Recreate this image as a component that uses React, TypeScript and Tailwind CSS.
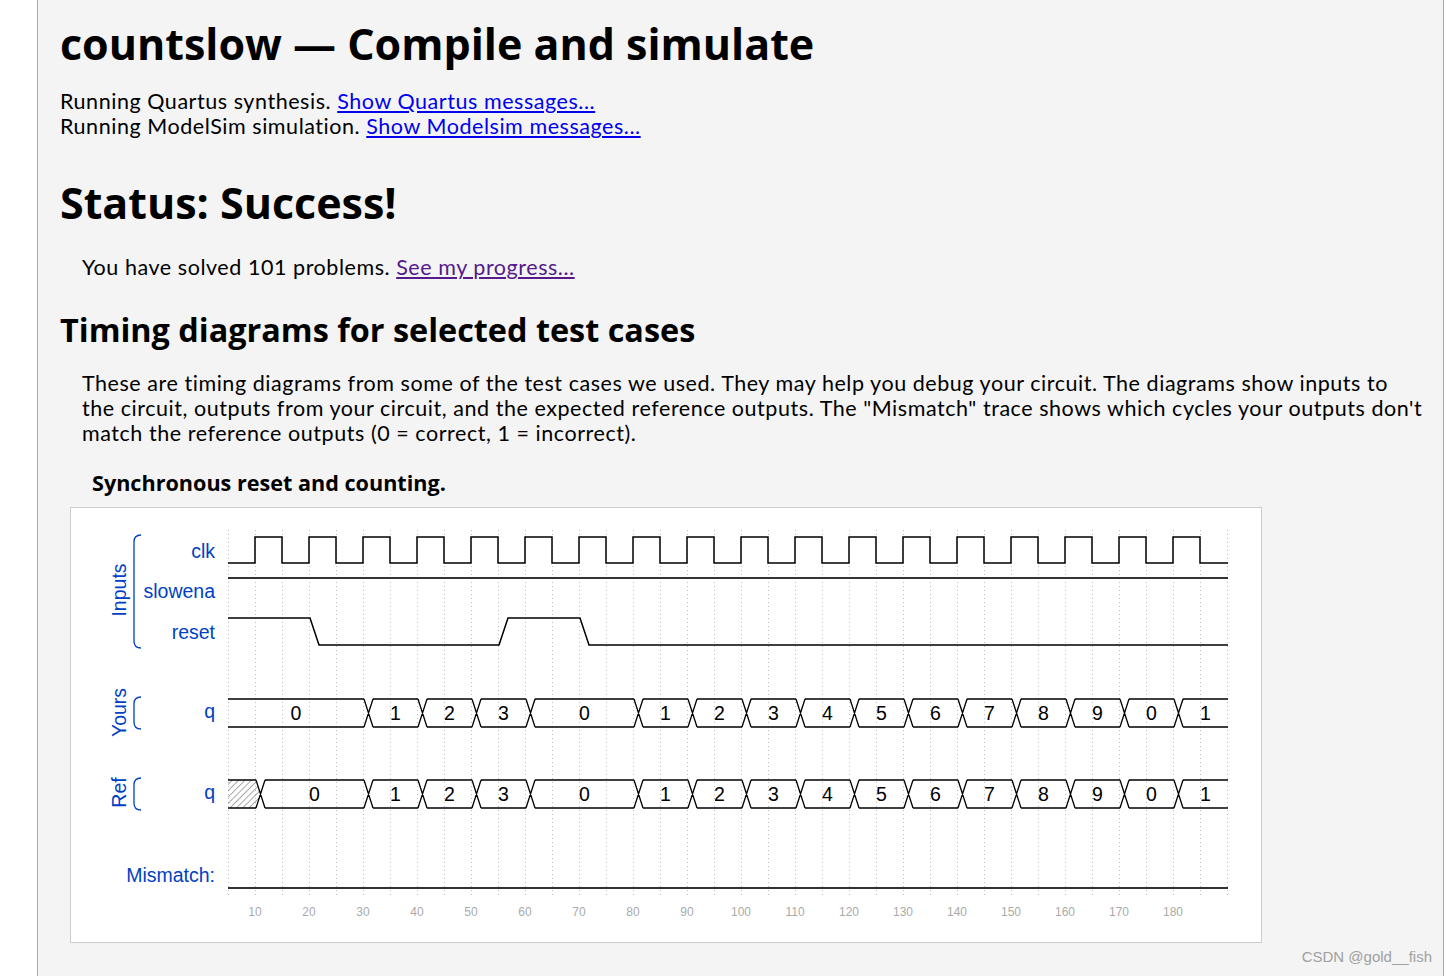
import React from "react";

const BLUE = "#0041c4";

function busPaths(top: number, bot: number, trans: number[]) {
  const w = 9;
  const segs: [number, number][] = [];
  let a = 228;
  for (const s of trans) {
    segs.push([a, s]);
    a = s + w;
  }
  segs.push([a, 1228]);
  let d = "";
  for (const [x1, x2] of segs) {
    d += `M${x1} ${top}H${x2}M${x1} ${bot}H${x2}`;
  }
  for (const s of trans) {
    d += `M${s} ${top}L${s + w} ${bot}M${s} ${bot}L${s + w} ${top}`;
  }
  return { d, segs };
}

function Diagram() {
  const edges: number[] = [];
  for (let k = 0; k < 18; k++) edges.push(255 + 54 * k);

  let clk = "M228 563";
  for (const r of edges) clk += `H${r}V537H${r + 27}V563`;
  clk += "H1228";

  const reset = "M228 618H310L319 645H499L508 618H580L589 645H1228";

  const yourTrans = [363, 417, 471, 525, 633, 687, 741, 795, 849, 903, 957, 1011, 1065, 1119, 1173].map((e) => e + 1);
  const yourVals = ["0", "1", "2", "3", "0", "1", "2", "3", "4", "5", "6", "7", "8", "9", "0", "1"];
  const yours = busPaths(699, 727, yourTrans);

  const refTrans = [256, ...yourTrans];
  const refVals: (string | null)[] = [null, ...yourVals];
  const ref = busPaths(780, 808, refTrans);

  const grid: number[] = [];
  for (let i = 0; i <= 37; i++) grid.push(228 + 27 * i);

  const ticks: number[] = [];
  for (let k = 0; k < 18; k++) ticks.push(k);

  return (
    <svg width={1190} height={434} className="block font-['Liberation_Sans',Arial,sans-serif]">
      <defs>
        <pattern id="hatch" width="4.5" height="4.5" patternUnits="userSpaceOnUse" patternTransform="rotate(45)">
          <line x1="0" y1="0" x2="0" y2="4.5" stroke="#555" strokeWidth="1" />
        </pattern>
      </defs>
      <g transform="translate(-71 -508)">
        {grid.map((x) => (
          <line key={x} x1={x + 0.5} y1={530} x2={x + 0.5} y2={895} stroke="#bbb" strokeWidth={1} strokeDasharray="1 3" />
        ))}

        <text transform="translate(126 590) rotate(-90)" textAnchor="middle" fontSize="19.5" fill={BLUE}>
          Inputs
        </text>
        <path d="M141 535Q134 535 134 542V641Q134 648 141 648" fill="none" stroke={BLUE} strokeWidth={1.3} />
        <text transform="translate(126 712.5) rotate(-90)" textAnchor="middle" fontSize="19.5" fill={BLUE}>
          Yours
        </text>
        <path d="M141 697Q134 697 134 704V722Q134 729 141 729" fill="none" stroke={BLUE} strokeWidth={1.3} />
        <text transform="translate(126 792.5) rotate(-90)" textAnchor="middle" fontSize="19.5" fill={BLUE}>
          Ref
        </text>
        <path d="M141 778Q134 778 134 785V803Q134 810 141 810" fill="none" stroke={BLUE} strokeWidth={1.3} />

        <g fontSize="19.5" fill={BLUE} textAnchor="end">
          <text x={215} y={558}>clk</text>
          <text x={215} y={598}>slowena</text>
          <text x={215} y={639}>reset</text>
          <text x={215} y={718}>q</text>
          <text x={215} y={799}>q</text>
          <text x={215} y={882}>Mismatch:</text>
        </g>

        <path d={clk} fill="none" stroke="#000" strokeWidth={1.5} />
        <line x1={228} y1={578} x2={1228} y2={578} stroke="#333" strokeWidth={2} />
        <path d={reset} fill="none" stroke="#000" strokeWidth={1.5} />

        <path d={yours.d} fill="none" stroke="#000" strokeWidth={1.3} />
        <g fontSize="19.5" fill="#000" textAnchor="middle">
          {yours.segs.map(([a, b], i) => (
            <text key={i} x={(a + b) / 2} y={720}>
              {yourVals[i]}
            </text>
          ))}
        </g>

        <polygon points="228,780 256,780 260.5,794 256,808 228,808" fill="url(#hatch)" stroke="none" />
        <path d={ref.d} fill="none" stroke="#000" strokeWidth={1.3} />
        <g fontSize="19.5" fill="#000" textAnchor="middle">
          {ref.segs.map(([a, b], i) =>
            refVals[i] === null ? null : (
              <text key={i} x={(a + b) / 2} y={801}>
                {refVals[i]}
              </text>
            )
          )}
        </g>

        <line x1={228} y1={888} x2={1228} y2={888} stroke="#333" strokeWidth={2} />

        <g fontSize="12" fill="#aaa" textAnchor="middle">
          {ticks.map((k) => (
            <text key={k} x={255 + 54 * k} y={916}>
              {(k + 1) * 10}
            </text>
          ))}
        </g>
      </g>
    </svg>
  );
}

export default function App() {
  return (
    <div className="relative w-[1447px] h-[976px] overflow-hidden bg-white">
      <div className="ml-[37px] w-[1407px] h-[976px] border-l border-r border-[#aaaaaa] bg-[#f4f4f4] px-[22px] pt-[19px] text-black">
        <h1 className="text-[43px] leading-[50px] font-bold font-['Open_Sans',sans-serif]">
          countslow — Compile and simulate
        </h1>
        <div className="mt-[20px] text-[21.5px] leading-[25px] tracking-[0.55px] font-[Lato,sans-serif]">
          <div>
            Running Quartus synthesis.{" "}
            <a className="text-[#0000ee] underline" href="#">
              Show Quartus messages...
            </a>
          </div>
          <div>
            Running ModelSim simulation.{" "}
            <a className="text-[#0000ee] underline" href="#">
              Show Modelsim messages...
            </a>
          </div>
        </div>
        <h1 className="mt-[39px] text-[43px] leading-[50px] font-bold font-['Open_Sans',sans-serif]">
          Status: Success!
        </h1>
        <p className="mt-[27px] ml-[22px] text-[21.5px] leading-[25px] tracking-[0.55px] font-[Lato,sans-serif]">
          You have solved 101 problems.{" "}
          <a className="text-[#551a8b] underline" href="#">
            See my progress...
          </a>
        </p>
        <h2 className="mt-[30px] text-[32.4px] leading-[38px] font-bold font-['Open_Sans',sans-serif]">
          Timing diagrams for selected test cases
        </h2>
        <p className="mt-[23px] ml-[22px] text-[21.5px] leading-[25px] tracking-[0.55px] whitespace-nowrap font-[Lato,sans-serif]">
          These are timing diagrams from some of the test cases we used. They may help you debug your circuit. The diagrams show inputs to
          <br />
          the circuit, outputs from your circuit, and the expected reference outputs. The "Mismatch" trace shows which cycles your outputs don't
          <br />
          match the reference outputs (0 = correct, 1 = incorrect).
        </p>
        <h3 className="mt-[24px] ml-[32px] text-[21.6px] leading-[26px] font-bold font-['Open_Sans',sans-serif]">
          Synchronous reset and counting.
        </h3>
        <div className="mt-[11px] ml-[10px] w-[1192px] h-[436px] border border-[#cccccc] bg-white">
          <Diagram />
        </div>
      </div>
      <div className="absolute right-[15px] top-[948px] text-[15px] leading-[18px] text-[#a0a0a0] font-['Liberation_Sans',Arial,sans-serif]">
        CSDN @gold__fish
      </div>
    </div>
  );
}
